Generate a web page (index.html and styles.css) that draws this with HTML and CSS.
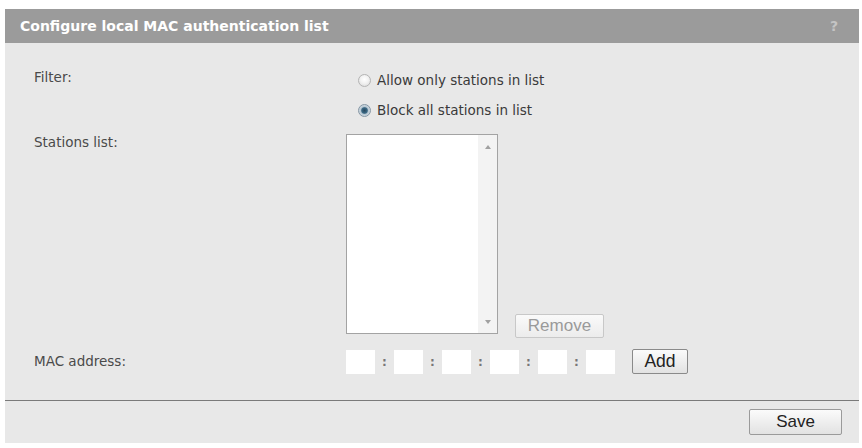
FILE: index.html
```html
<!DOCTYPE html>
<html>
<head>
<meta charset="utf-8">
<link rel="stylesheet" href="styles.css">
</head>
<body>
<div class="panel">
  <div class="header">
    <span class="title">Configure local MAC authentication list</span>
    <span class="help">?</span>
  </div>
  <div class="content">
    <div class="row filter-row">
      <div class="label">Filter:</div>
      <div class="control radios">
        <label class="radio"><span class="dot"></span>Allow only stations in list</label>
        <label class="radio"><span class="dot checked"></span>Block all stations in list</label>
      </div>
    </div>
    <div class="row stations-row">
      <div class="label">Stations list:</div>
      <div class="control list-wrap">
        <div class="listbox">
          <div class="list-area"></div>
          <div class="scroll">
            <span class="arrow up"></span>
            <span class="arrow down"></span>
          </div>
        </div>
        <button class="btn disabled remove">Remove</button>
      </div>
    </div>
    <div class="row mac-row">
      <div class="label">MAC address:</div>
      <div class="control mac">
        <span class="oct"></span><span class="colon">:</span>
        <span class="oct"></span><span class="colon">:</span>
        <span class="oct"></span><span class="colon">:</span>
        <span class="oct"></span><span class="colon">:</span>
        <span class="oct"></span><span class="colon">:</span>
        <span class="oct"></span>
        <button class="btn add">Add</button>
      </div>
    </div>
  </div>
  <div class="footer">
    <button class="btn save">Save</button>
  </div>
</div>
</body>
</html>
```

FILE: styles.css
```css
html, body {
  margin: 0;
  padding: 0;
  background: #ffffff;
}
body {
  font-family: "DejaVu Sans", Verdana, sans-serif;
  font-size: 13.5px;
  color: #444;
}
.panel {
  margin: 9px 0 0 5px;
  width: 854px;
  background: #e8e8e8;
}
.header {
  height: 34px;
  background: #9b9b9b;
  display: flex;
  align-items: center;
  justify-content: space-between;
  padding: 0 21px 0 15px;
  color: #fff;
  font-weight: bold;
  font-size: 14px;
}
.help {
  color: #c4c4c4;
  font-size: 14px;
}
.content {
  height: 358px;
  padding: 22px 0 0 29px;
  box-sizing: border-box;
  border-bottom: 1px solid #7a7a7a;
}
.row {
  display: grid;
  grid-template-columns: 312px auto;
}
.label {
  color: #4a4a4a;
}
.filter-row .label {
  padding-top: 4px;
}
.radios {
  display: flex;
  flex-direction: column;
  padding-left: 12px;
}
.radio {
  height: 30px;
  display: flex;
  align-items: center;
  gap: 6px;
  color: #3a3a3a;
}
.dot {
  width: 13px;
  height: 13px;
  border-radius: 50%;
  border: 1px solid #b4b4b4;
  background: radial-gradient(circle at 50% 40%, #ffffff 0%, #f2f2f2 45%, #d6d6d6 100%);
  box-sizing: border-box;
}
.dot.checked {
  border-color: #8596a4;
  background: radial-gradient(circle, #27475e 0%, #3a6884 36%, #b9c8d3 50%, #e6ecf0 100%);
}
.stations-row {
  margin-top: 9px;
}
.list-wrap {
  display: flex;
  align-items: flex-end;
  gap: 17px;
}
.listbox {
  width: 152px;
  height: 200px;
  box-sizing: border-box;
  border: 1px solid #a3a3a3;
  background: #fff;
  display: flex;
}
.list-area {
  flex: 1;
}
.scroll {
  width: 19px;
  background: #f3f3f3;
  display: flex;
  flex-direction: column;
  justify-content: space-between;
  align-items: center;
  padding: 10px 0 9px;
}
.arrow {
  width: 0;
  height: 0;
  border-left: 3px solid transparent;
  border-right: 3px solid transparent;
}
.arrow.up {
  border-bottom: 4px solid #a0a0a0;
}
.arrow.down {
  border-top: 4px solid #a0a0a0;
}
.btn {
  font-family: "Liberation Sans", Arial, sans-serif;
  background: linear-gradient(#fbfbfb, #e2e2e2);
  border: 1px solid #9a9a9a;
  border-radius: 2px;
  color: #222;
  padding: 0;
  box-sizing: border-box;
}
.btn.disabled {
  border-color: #c8c8c8;
  color: #9a9a9a;
  background: linear-gradient(#fafafa, #ececec);
}
.remove {
  width: 89px;
  height: 24px;
  font-size: 17px;
  margin-bottom: -4px;
}
.mac-row {
  margin-top: 15px;
}
.mac-row .label {
  padding-top: 4px;
}
.mac {
  display: flex;
  align-items: center;
}
.oct {
  width: 29px;
  height: 24px;
  background: #fff;
}
.colon {
  width: 19px;
  text-align: center;
  color: #777;
  font-weight: bold;
  font-size: 12px;
}
.add {
  width: 56px;
  height: 25px;
  font-size: 17.5px;
  margin-left: 17px;
  border-color: #8a8a8a;
}
.footer {
  height: 42px;
  display: flex;
  justify-content: flex-end;
  align-items: flex-start;
  padding: 8px 17px 0 0;
  box-sizing: border-box;
}
.save {
  width: 93px;
  height: 26px;
  font-size: 17px;
}
```
